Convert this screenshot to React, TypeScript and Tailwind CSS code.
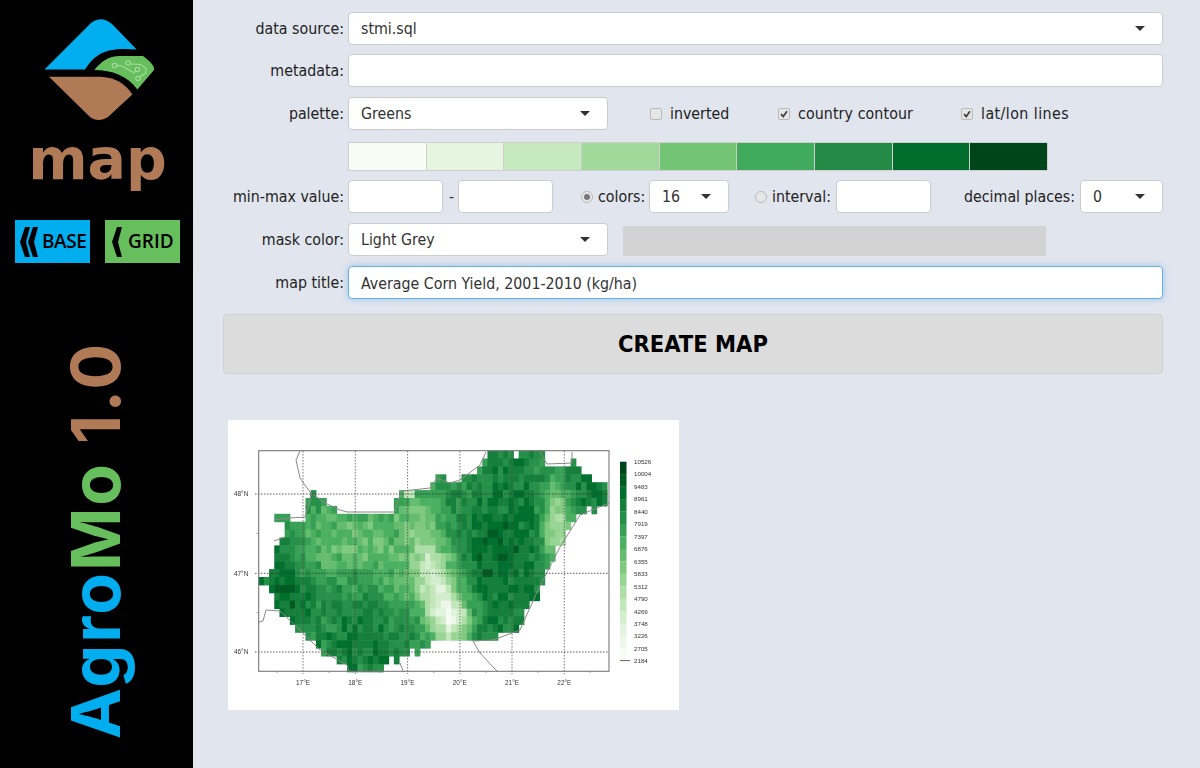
import React from "react";

const GREENS = ["#f7fcf5","#e5f5e0","#c7e9c0","#a1d99b","#74c476","#41ab5d","#238b45","#006d2c","#00441b"];

function hexToRgb(h: string) {
  return [parseInt(h.slice(1,3),16),parseInt(h.slice(3,5),16),parseInt(h.slice(5,7),16)];
}
function ramp(t: number) {
  const p = Math.max(0, Math.min(1, t)) * 8;
  const i = Math.min(7, Math.floor(p));
  const f = p - i;
  const a = hexToRgb(GREENS[i]);
  const b = hexToRgb(GREENS[i+1]);
  return `rgb(${a.map((v,k)=>Math.round(v+(b[k]-v)*f)).join(",")})`;
}

// column spans of the grid for each of the 28 rows
const SPANS: [number,number][][] = [
  [[44,48],[50,54]],
  [[43,54],[60,60]],
  [[42,61]],
  [[34,35],[39,63]],
  [[33,66]],
  [[10,10],[27,66]],
  [[9,12],[26,66]],
  [[9,14],[26,62],[64,64]],
  [[3,5],[9,60]],
  [[5,59]],
  [[5,58]],
  [[4,58]],
  [[3,56]],
  [[3,56]],
  [[3,55]],
  [[2,54]],
  [[0,54]],
  [[2,53]],
  [[3,53]],
  [[3,51]],
  [[4,50]],
  [[6,50]],
  [[7,49]],
  [[9,45]],
  [[11,32]],
  [[12,28],[30,30]],
  [[15,24],[26,26]],
  [[17,23]],
];

const BLOBS: [number,number,number,number,number][] = [
  [48,12,6,10,2.2],
  [22,23,8,4,1.8],
  [5,16,3.5,5,2.8],
  [16,11,8,3.5,-2.6],
  [30,8,3,2.5,-2.2],
  [32,13,2.5,3,-3],
  [33,16,2.5,3,-3.8],
  [35,19,3,3,-4.6],
  [37,21,2.5,2,-6.5],
  [57,9,2,4,-6.2],
  [63,5,4,3,2],
  [26,18,2.5,4,-1.6],
  [41,14,3,6,0.8],
];

function noise(c: number, r: number) {
  const s = Math.sin(c * 12.9898 + r * 78.233) * 43758.5453;
  return (s - Math.floor(s)) * 2.4 - 1.2;
}
function shade(c: number, r: number) {
  let v = 10.5;
  for (const [x,y,sx,sy,a] of BLOBS) {
    v += a * Math.exp(-((c-x)**2)/(2*sx*sx) - ((r-y)**2)/(2*sy*sy));
  }
  v += noise(c, r);
  if (r === 5 && c >= 28 && c <= 29) v = 4;
  return Math.max(0, Math.min(15, Math.round(v)));
}

const LABELS = ["10526","10004","9483","8961","8440","7919","7397","6876","6355","5833","5312","4790","4269","3748","3226","2705","2184"];
const BORDERS = [
  "300,451 296,460 300,478 310,492 325,503 340,510 347,512 395,512 398,500 402,491 430,488 437,478 450,483 460,480 480,465 486,452",
  "540,452 547,464 572,463 572,452",
  "609,503 580,515 560,547 538,590 520,630 493,640 473,641",
  "473,641 480,653 493,667 497,671",
  "400,663 403,671",
  "259,622 263,621 266,610 280,611 300,630 320,650 347,665 349,671",
  "274,520 290,518 305,517 310,500 311,492",
  "274,541 285,537",
];

function MapPlot() {
  return (
    <svg viewBox="228 420 451 290" className="block h-[290px] w-[451px]" fontFamily="'Liberation Sans', sans-serif">
      <defs>
        <filter id="soft" x="0" y="0" width="1" height="1"><feGaussianBlur stdDeviation="0.6" /></filter>
        <filter id="softer" x="0" y="0" width="1" height="1"><feGaussianBlur stdDeviation="0.25" /></filter>
      </defs>
      <rect x="228" y="420" width="451" height="290" fill="#ffffff" />
      <g filter="url(#soft)">
        {SPANS.flatMap((spans, r) =>
          spans.flatMap(([a, b]) =>
            Array.from({ length: b - a + 1 }, (_, i) => {
              const c = a + i;
              return (
                <rect key={`${r}-${c}`} x={258.67 + c * 5.2} y={450.6 + r * 7.9} width="5.7" height="8.4" fill={ramp(shade(c, r) / 15)} />
              );
            })
          )
        )}
        {BORDERS.map((p) => (
          <polyline key={p} points={p} fill="none" stroke="#888888" strokeWidth="1" />
        ))}
        {[303, 355.3, 407.6, 459.9, 512, 564.3].map((x) => (
          <line key={x} x1={x} x2={x} y1="451" y2="674" stroke="#555555" strokeWidth="0.8" strokeDasharray="1.5 1.5" />
        ))}
        {[494, 573.3, 652].map((y) => (
          <line key={y} x1="255" x2="609" y1={y} y2={y} stroke="#333333" strokeWidth="0.8" strokeDasharray="1.5 1.5" />
        ))}
        <rect x="258.7" y="450.7" width="350.3" height="220.6" fill="none" stroke="#777777" strokeWidth="1.1" />
        {[277, 329, 381, 433.7, 486, 538, 590].map((x) => (
          <line key={x} x1={x} x2={x} y1="671" y2="673" stroke="#888888" strokeWidth="0.8" />
        ))}
        {[533.5, 612.5].map((y) => (
          <line key={y} x1="256.5" x2="258.7" y1={y} y2={y} stroke="#888888" strokeWidth="0.8" />
        ))}
        {Array.from({ length: 16 }, (_, i) => (
          <rect key={i} x="620" y={461.7 + i * 12.46} width="6.5" height="12.6" fill={ramp((15 - i) / 15)} />
        ))}
        <line x1="620" x2="630" y1="660.6" y2="660.6" stroke="#555555" strokeWidth="0.9" />
      </g>
      <g fill="#333333" fontSize="6.2" filter="url(#softer)">
        {["48°N", "47°N", "46°N"].map((t, i) => (
          <text key={t} x="234" y={[496.2, 575.5, 654.2][i]} fontSize="6.4">{t}</text>
        ))}
        {["17°E", "18°E", "19°E", "20°E", "21°E", "22°E"].map((t, i) => (
          <text key={t} x={303 + i * 52.26} y="684.5" textAnchor="middle" fontSize="6.4">{t}</text>
        ))}
        {LABELS.map((t, i) => (
          <text key={t} x="634" y={464 + i * 12.46}>{t}</text>
        ))}
      </g>
    </svg>
  );
}

function Caret() {
  return <span className="h-0 w-0 border-x-[5px] border-t-[5px] border-x-transparent border-t-[#333333]" />;
}

function Select({ value, className }: { value: string; className: string }) {
  return (
    <div className={`flex h-[33px] items-center justify-between rounded-[4px] border border-[#cccccc] bg-white pl-3 pr-[17px] text-[#333333] ${className}`}>
      <span>{value}</span>
      <Caret />
    </div>
  );
}

function Input({ className, value = "", focus = false }: { className: string; value?: string; focus?: boolean }) {
  return (
    <input
      readOnly
      value={value}
      className={`h-[33px] rounded-[4px] border bg-white px-3 pt-[1px] text-[#333333] outline-none ${focus ? "border-[#66afe9] shadow-[0_0_6px_rgba(102,175,233,0.6)]" : "border-[#cccccc]"} ${className}`}
    />
  );
}

function Label({ children }: { children: React.ReactNode }) {
  return <span className="mr-[4px] w-[121px] shrink-0 text-right text-[#222222]">{children}</span>;
}

function Check({ on = false }: { on?: boolean }) {
  return (
    <span className="flex h-3 w-3 shrink-0 items-center justify-center rounded-[2px] border border-[#bbbbbb] bg-[#e6e6e6]">
      {on && (
        <svg viewBox="0 0 10 10" className="h-[10px] w-[10px]">
          <path d="M2 5.2 L4.2 7.6 L8 2.2" fill="none" stroke="#444444" strokeWidth="1.8" />
        </svg>
      )}
    </span>
  );
}

function Radio({ on = false }: { on?: boolean }) {
  return (
    <span className="flex h-3 w-3 shrink-0 items-center justify-center rounded-full border border-[#bbbbbb] bg-[#e6e6e6]">
      {on && <span className="h-[6px] w-[6px] rounded-full bg-[#777777]" />}
    </span>
  );
}

function Logo() {
  return (
    <svg viewBox="0 0 193 130" className="block h-[130px] w-[193px]">
      <path d="M44.5 69.6 L88 26 C95 17.5 104 17 112 24 L136.7 49.5 C108 47 96 52 85 69.6 Z" fill="#00aeef" />
      <path d="M94.3 70 C101 62 108 56 120 56 L143 56 C148 60 155 65 154 70 L137.3 89.5 C128 76 112 70 94.3 70 Z" fill="#66bf5c" />
      <path d="M49 76.7 L100 76.7 C115 77 126 84 132.3 94.5 L108 117 C102 121 95 121 90 117 Z" fill="#b07a56" />
      <g fill="none" stroke="#a8dca2" strokeWidth="1.1">
        <circle cx="114.5" cy="65.5" r="2.2" />
        <circle cx="128" cy="63" r="2.2" />
        <circle cx="137.5" cy="69.5" r="2.2" />
        <circle cx="138" cy="78.5" r="2.2" />
        <path d="M116.7 65.5 L122 66 L134 73 L135.5 70.5 M130 64 L140 64.5 L146 68 L146 73 L139.5 77" />
      </g>
    </svg>
  );
}

function Chevron({ x }: { x: number }) {
  return <path d={`M${x + 5} 0 L${x + 10} 0 L${x + 6} 15 L${x + 10} 30 L${x + 5} 30 L${x} 15 Z`} fill="#000000" />;
}

function Sidebar() {
  return (
    <aside className="flex h-[768px] w-[193px] shrink-0 flex-col items-center bg-black [font-stretch:normal]">
      <Logo />
      <div className="-mt-[6px] ml-[2px] h-[70px] text-[57px] font-bold leading-[70px] text-[#b07a56] [font-family:'DejaVu_Sans',sans-serif]">map</div>
      <div className="ml-[2px] mt-[26px] flex gap-[15px]">
        <div className="flex h-[43px] w-[75px] items-center bg-[#00aeef] pl-[5px] text-black">
          <svg viewBox="0 0 18 30" className="h-[30px] w-[18px] shrink-0"><Chevron x={0} /><Chevron x={8} /></svg>
          <span className="ml-[4px] text-[19px] font-semibold tracking-[-0.4px] [font-family:'Open_Sans',sans-serif]">BASE</span>
        </div>
        <div className="flex h-[43px] w-[75px] items-center bg-[#66bf5c] pl-[7px] text-black">
          <svg viewBox="0 0 10 30" className="h-[30px] w-[10px] shrink-0"><Chevron x={0} /></svg>
          <span className="ml-[6px] text-[19px] font-semibold [font-family:'Open_Sans',sans-serif]">GRID</span>
        </div>
      </div>
      <div className="mr-[4px] mt-[79px] rotate-180 whitespace-nowrap text-[68px] font-bold leading-[1] tracking-[2px] [writing-mode:vertical-rl] [font-family:Inter,sans-serif]">
        <span className="text-[#00aeef]">Agro</span>
        <span className="text-[#66bf5c]">Mo</span>
        <span className="text-[#b07a56]"> 1.0</span>
      </div>
    </aside>
  );
}

export default function App() {
  return (
    <div className="flex h-[768px] w-[1200px] overflow-hidden bg-[#e1e5ee] text-[15.8px] [font-family:'DejaVu_Sans',sans-serif] [font-stretch:condensed]">
      <Sidebar />
      <main className="w-[1007px] pl-[30px] pt-3">
        <div className="flex w-[940px] items-center">
          <Label>data source:</Label>
          <Select value="stmi.sql" className="w-[815px]" />
        </div>
        <div className="mt-[9px] flex items-center">
          <Label>metadata:</Label>
          <Input className="w-[815px]" />
        </div>
        <div className="mt-[10px] flex items-center">
          <Label>palette:</Label>
          <Select value="Greens" className="w-[260px]" />
          <div className="ml-[42px] flex w-[128px] items-center gap-2 pt-[1px]"><Check /><span className="text-[#222222]">inverted</span></div>
          <div className="flex w-[183px] items-center gap-2 pt-[1px]"><Check on /><span className="tracking-[0.1px] text-[#222222]">country contour</span></div>
          <div className="flex items-center gap-2 pt-[1px]"><Check on /><span className="tracking-[0.45px] text-[#222222]">lat/lon lines</span></div>
        </div>
        <div className="ml-[125px] mt-3 flex h-[29px] w-[700px] gap-px border border-[#cfcfcf] bg-[#cfcfcf]">
          {GREENS.map((c) => (
            <div key={c} className="flex-1" style={{ backgroundColor: c }} />
          ))}
        </div>
        <div className="mt-[9px] flex items-center">
          <Label>min-max value:</Label>
          <Input className="w-[95px]" />
          <span className="mx-[6px] w-[3px] text-[#333333]">-</span>
          <Input className="w-[95px]" />
          <span className="ml-[28px]"><Radio on /></span>
          <span className="ml-[5px] w-[47px] text-[#222222]">colors:</span>
          <Select value="16" className="ml-[4px] w-[80px]" />
          <span className="ml-[26px]"><Radio /></span>
          <span className="ml-[5px] w-[60px] text-[#222222]">interval:</span>
          <Input className="ml-[4px] w-[95px]" />
          <span className="ml-[33px] w-[112px] text-[#222222]">decimal places:</span>
          <Select value="0" className="ml-[4px] w-[83px]" />
        </div>
        <div className="mt-[10px] flex items-center">
          <Label>mask color:</Label>
          <Select value="Light Grey" className="w-[260px]" />
          <div className="ml-[15px] mt-[3px] h-[30px] w-[423px] bg-[#d3d3d3]" />
        </div>
        <div className="mt-[10px] flex items-center">
          <Label>map title:</Label>
          <Input className="w-[815px]" value="Average Corn Yield, 2001-2010 (kg/ha)" focus />
        </div>
        <button className="mt-[15px] block h-[60px] w-[940px] rounded-[4px] border border-[#cfcfcf] bg-[#dcdcdc] pt-[2px] text-[23.5px] font-bold text-black">
          CREATE MAP
        </button>
        <div className="ml-[5px] mt-[46px] w-[451px]">
          <MapPlot />
        </div>
      </main>
    </div>
  );
}
